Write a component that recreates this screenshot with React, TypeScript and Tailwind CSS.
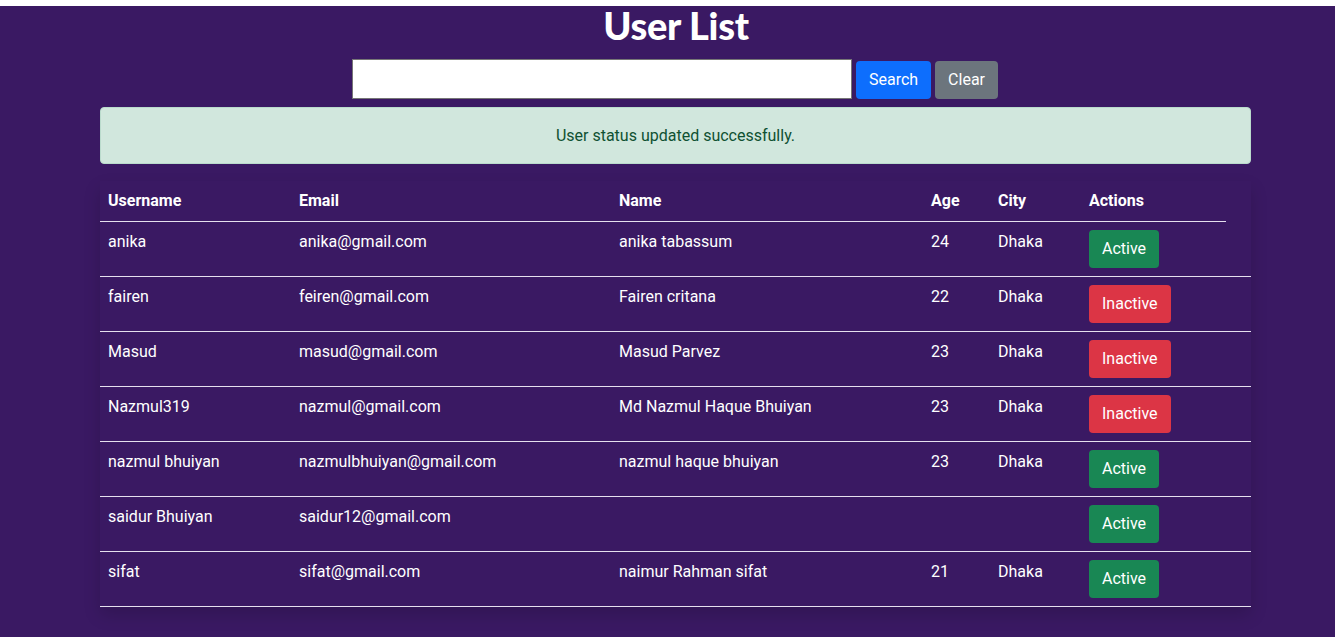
import React from 'react';

type User = {
  username: string;
  email: string;
  name: string;
  age: string;
  city: string;
  active: boolean;
};

const users: User[] = [
  { username: 'anika', email: 'anika@gmail.com', name: 'anika tabassum', age: '24', city: 'Dhaka', active: true },
  { username: 'fairen', email: 'feiren@gmail.com', name: 'Fairen critana', age: '22', city: 'Dhaka', active: false },
  { username: 'Masud', email: 'masud@gmail.com', name: 'Masud Parvez', age: '23', city: 'Dhaka', active: false },
  { username: 'Nazmul319', email: 'nazmul@gmail.com', name: 'Md Nazmul Haque Bhuiyan', age: '23', city: 'Dhaka', active: false },
  { username: 'nazmul bhuiyan', email: 'nazmulbhuiyan@gmail.com', name: 'nazmul haque bhuiyan', age: '23', city: 'Dhaka', active: true },
  { username: 'saidur Bhuiyan', email: 'saidur12@gmail.com', name: '', age: '', city: '', active: true },
  { username: 'sifat', email: 'sifat@gmail.com', name: 'naimur Rahman sifat', age: '21', city: 'Dhaka', active: true },
];

const cols = 'grid grid-cols-[191px_320px_312px_67px_91px_170px]';

export default function App() {
  return (
    <div className="min-h-[637px] bg-[#3a1963] font-['Roboto',sans-serif] text-white">
      <div className="h-[6px] bg-white" />

      {/* Heading */}
      <h1 className="pl-[17px] text-center font-['Lato',sans-serif] text-[38px] font-black leading-[40px] tracking-[-0.3px] -mt-[1px]">
        User List
      </h1>

      {/* Search */}
      <div className="mt-[14px] flex justify-center items-center gap-[4px] pl-[15px]">
        <input
          className="w-[500px] h-[40px] bg-white border border-[#767676] text-black outline-none px-2"
          type="text"
        />
        <button className="mt-[2px] h-[38px] px-[13px] rounded-[4px] bg-[#0d6efd] text-[16px] leading-[24px]">Search</button>
        <button className="mt-[2px] h-[38px] px-[13px] rounded-[4px] bg-[#6c757d] text-[16px] leading-[24px]">Clear</button>
      </div>

      <div className="mx-[100px] w-[1151px]">
        {/* Alert */}
        <div className="mt-[8px] h-[57px] rounded-[4px] border border-[#badbcc] bg-[#d1e7dd] text-[#0f5132] flex items-center justify-center text-[16px]">
          User status updated successfully.
        </div>

        {/* Table */}
        <div className="mt-[17px] bg-[#3a1963] shadow-[0_8px_16px_rgba(0,0,0,0.15)]">
          <div className={`${cols} mr-[25px] border-b border-[#e5e0ee] font-bold text-[16px] leading-[24px]`}>
            {['Username', 'Email', 'Name', 'Age', 'City', 'Actions'].map((h) => (
              <div key={h} className="p-2">
                {h}
              </div>
            ))}
          </div>
          {users.map((u) => (
            <div key={u.username} className={`${cols} border-b border-[#e5e0ee] text-[16px] leading-[24px]`}>
              <div className="p-2">{u.username}</div>
              <div className="p-2">{u.email}</div>
              <div className="p-2">{u.name}</div>
              <div className="p-2">{u.age}</div>
              <div className="p-2">{u.city}</div>
              <div className="p-2">
                {u.active ? (
                  <button className="h-[38px] px-[13px] rounded-[4px] bg-[#198754]">Active</button>
                ) : (
                  <button className="h-[38px] px-[13px] rounded-[4px] bg-[#dc3545]">Inactive</button>
                )}
              </div>
            </div>
          ))}
        </div>
      </div>
    </div>
  );
}
